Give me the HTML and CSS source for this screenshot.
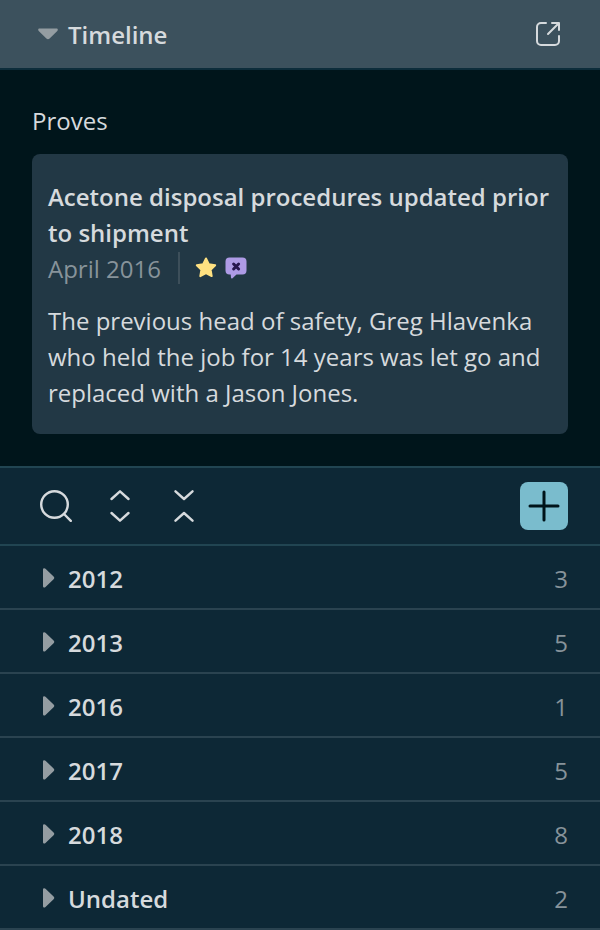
FILE: index.html
```html
<!DOCTYPE html>
<html lang="en">
<head>
<meta charset="utf-8">
<meta name="viewport" content="width=device-width, initial-scale=1">
<title>Timeline</title>
<link rel="stylesheet" href="styles.css">
</head>
<body>
<svg class="defs" aria-hidden="true">
  <symbol id="caret" viewBox="0 0 12 20"><path d="M0 1.500C0 .2 1.500-.3 2.500.7l8.100 7.700c.9.9.9 2 0 2.900l-8.100 7.700c-1 1-2.500.5-2.500-.8z"/></symbol>
</svg>
<main class="panel">
  <header class="header">
    <button class="toggle" type="button" aria-expanded="true">
      <svg class="arrow-down" viewBox="0 0 20 12" aria-hidden="true"><path d="M1.600.500C.2.500-.3 1.900.7 2.900l7.700 7.700c.9.9 2.300.9 3.200 0l7.700-7.700c1-1 .5-2.400-.9-2.400z"/></svg>
      <span class="name">Timeline</span>
    </button>
    <button class="icon-button" type="button" aria-label="Open in new window">
      <svg class="line-icon" viewBox="0 0 32 32" aria-hidden="true"><path d="M14 5H9a4 4 0 0 0-4 4v14a4 4 0 0 0 4 4h14a4 4 0 0 0 4-4v-5M16 16 27 5M20 5h7v7"/></svg>
    </button>
  </header>
  <section class="proves">
    <h2 class="label">Proves</h2>
    <article class="card">
      <h3 class="title">Acetone disposal procedures updated prior to shipment</h3>
      <div class="meta">
        <time class="date" datetime="2016-04">April 2016</time>
        <svg class="badge" viewBox="0 0 24 24" role="img" aria-label="Starred"><path class="star" d="m12 2.500 2.800 5.800 6.400.9-4.600 4.500 1.100 6.400-5.700-3-5.700 3 1.100-6.400-4.600-4.500 6.400-.9z"/></svg>
        <svg class="badge" viewBox="0 0 24 24" role="img" aria-label="Disputed"><path class="bubble" d="M5.500 1.500h13a4 4 0 0 1 4 4v9a4 4 0 0 1-4 4h-6l-4 3.800q-1.200.8-1.500-.5l-.3-3.300H5.500a4 4 0 0 1-4-4v-9a4 4 0 0 1 4-4z"/><path class="cross" d="m9.600 8 5 5m0-5-5 5"/></svg>
      </div>
      <p class="body">The previous head of safety, Greg Hlavenka who held the job for 14 years was let go and replaced with a Jason Jones.</p>
    </article>
  </section>
  <div class="toolbar">
    <button class="icon-button" type="button" aria-label="Search"><svg class="line-icon" viewBox="0 0 32 32" aria-hidden="true"><circle cx="14.500" cy="14.500" r="13.300"/><path d="m24 24 6.800 6.800"/></svg></button>
    <button class="icon-button" type="button" aria-label="Expand all"><svg class="line-icon" viewBox="0 0 32 32" aria-hidden="true"><path d="m7.500 9 8.500-7.700L24.500 9M7.500 23l8.500 7.700 8.500-7.700"/></svg></button>
    <button class="icon-button" type="button" aria-label="Collapse all"><svg class="line-icon" viewBox="0 0 32 32" aria-hidden="true"><path d="m7.500 1.300 8.500 7.700 8.500-7.700M7.500 30.700l8.500-7.700 8.500 7.700"/></svg></button>
    <button class="add" type="button" aria-label="Add"><svg viewBox="0 0 32 32" aria-hidden="true"><path d="M16 2v28M2 16h28"/></svg></button>
  </div>
  <ul class="years">
    <li><button class="row" type="button"><svg class="arrow" aria-hidden="true"><use href="#caret"/></svg><span class="name">2012</span><span class="count">3</span></button></li>
    <li><button class="row" type="button"><svg class="arrow" aria-hidden="true"><use href="#caret"/></svg><span class="name">2013</span><span class="count">5</span></button></li>
    <li><button class="row" type="button"><svg class="arrow" aria-hidden="true"><use href="#caret"/></svg><span class="name">2016</span><span class="count">1</span></button></li>
    <li><button class="row" type="button"><svg class="arrow" aria-hidden="true"><use href="#caret"/></svg><span class="name">2017</span><span class="count">5</span></button></li>
    <li><button class="row" type="button"><svg class="arrow" aria-hidden="true"><use href="#caret"/></svg><span class="name">2018</span><span class="count">8</span></button></li>
    <li><button class="row" type="button"><svg class="arrow" aria-hidden="true"><use href="#caret"/></svg><span class="name">Undated</span><span class="count">2</span></button></li>
  </ul>
</main>
</body>
</html>
```
FILE: styles.css
```css
* {
  box-sizing: border-box;
}

body {
  margin: 0;
  background: #0d2836;
  color: #d6dadd;
  font: 400 24px/36px "Open Sans", "Noto Sans", sans-serif;
}

h2, h3, p, ul {
  margin: 0;
  padding: 0;
  font-size: 24px;
}

button {
  margin: 0;
  padding: 0;
  border: 0;
  background: none;
  color: inherit;
  font: inherit;
  text-align: left;
  cursor: pointer;
}

svg {
  display: block;
  flex: none;
}

.defs {
  display: none;
}

.header {
  display: flex;
  align-items: center;
  justify-content: space-between;
  padding: 15px 36px 15px 38px;
  border-bottom: 2px solid #0d2d3b;
  background: #3c515d;
}

.toggle {
  display: flex;
  align-items: center;
  gap: 10px;
  font-weight: 600;
}

.name,
.count {
  padding-top: 2px;
}

.arrow-down {
  width: 20px;
  height: 12px;
  fill: #949da2;
}

.icon-button {
  width: 32px;
  height: 32px;
}

.line-icon {
  width: 32px;
  height: 32px;
  fill: none;
  stroke: #d6dadd;
  stroke-width: 2;
  stroke-linecap: round;
  stroke-linejoin: round;
}

.toolbar .line-icon {
  stroke-width: 2.4;
}

.proves {
  padding: 33px 32px 32px;
  border-bottom: 2px solid #214552;
  background: #00151b;
}

.label {
  margin-bottom: 15px;
  font-weight: 400;
}

.card {
  padding: 25px 16px 23px;
  border-radius: 8px;
  background: #223845;
}

.title {
  font-weight: 600;
}

.meta {
  display: flex;
  align-items: center;
  min-height: 34px;
  margin-bottom: 18px;
  gap: 6px;
}

.date {
  margin-right: 8px;
  padding-top: 2px;
  padding-right: 17px;
  border-right: 2px solid #3d4f5a;
  color: #87939a;
  line-height: 30px;
}

.badge {
  width: 24px;
  height: 24px;
}

.star {
  fill: #ffe181;
  stroke: #ffe181;
  stroke-width: 2;
  stroke-linejoin: round;
}

.bubble {
  fill: #ae9be6;
}

.cross {
  fill: none;
  stroke: #27164f;
  stroke-width: 3;
  stroke-linecap: round;
}

.toolbar {
  display: flex;
  align-items: center;
  gap: 32px;
  padding: 14px 32px 14px 40px;
  border-bottom: 2px solid #214552;
}

.add {
  display: grid;
  place-items: center;
  width: 48px;
  height: 48px;
  margin-left: auto;
  border-radius: 8px;
  background: #7abccd;
}

.add svg {
  width: 32px;
  height: 32px;
  stroke: #00141a;
  stroke-width: 3;
  stroke-linecap: round;
}

.years {
  list-style: none;
}

.row {
  display: flex;
  align-items: center;
  width: 100%;
  padding: 13px 32px 11px 43px;
  border-bottom: 2px solid #2a4350;
  font-weight: 600;
}

.arrow {
  width: 12px;
  height: 20px;
  margin-right: 13px;
  fill: #949da2;
}

.count {
  margin-left: auto;
  color: #87939a;
  font-weight: 400;
}
```
